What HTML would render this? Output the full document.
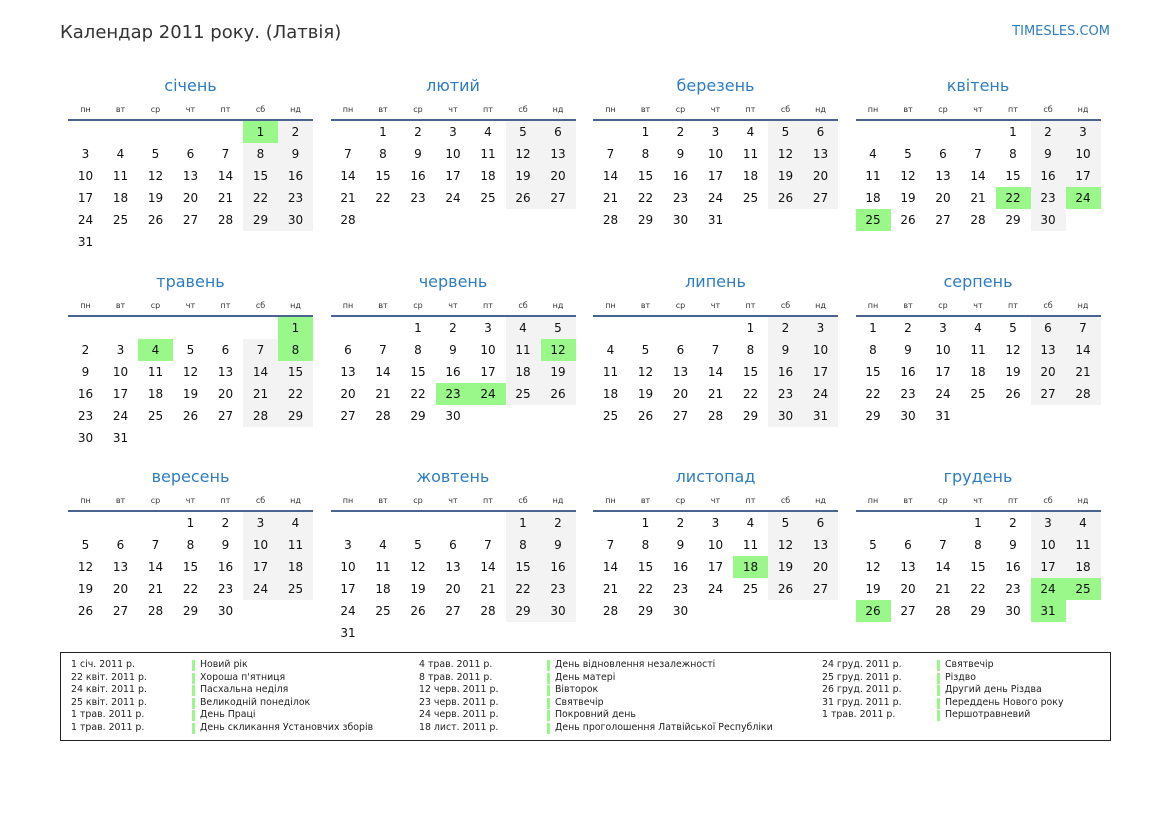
<!DOCTYPE html>
<html><head><meta charset="utf-8"><style>
*{margin:0;padding:0;box-sizing:border-box}
body{width:1169px;height:827px;background:#fff;font-family:"DejaVu Sans","Liberation Sans",sans-serif;color:#111;position:relative;overflow:hidden}
.t{position:absolute;left:60px;top:22px;font-size:18px;color:#333}
.s{position:absolute;right:59px;top:24px;font-size:13px;color:#2f7dc0}
.m{position:absolute;width:245px}
.m h2{height:30px;line-height:31px;text-align:center;font-weight:normal;font-size:16px;color:#2f7dc0}
.wd{position:absolute;top:34px;left:0;width:245px;display:flex;font-size:8px;color:#333;line-height:12px}
.wd span{width:35px;text-align:center}
.ln{position:absolute;top:49px;left:0;width:245px;height:2px;background:#48648f}
table{position:absolute;top:51px;left:0;border-collapse:collapse;table-layout:fixed;width:245px}
td{width:35px;height:22px;text-align:center;font-size:12px;padding:1px 0 0 0;line-height:21px}
td.w{background:#f3f3f3}
td.g{background:#9af78a}
.lg{position:absolute;left:60px;top:652px;width:1051px;height:89px;border:1px solid #222;font-size:9.4px;color:#222}
.c{position:absolute;top:6px;line-height:12.6px;white-space:nowrap}
.n div{padding-left:8px;background:linear-gradient(#9af78a,#9af78a) no-repeat 0 1px/3px 11px}
</style></head><body>
<div class="t">Календар 2011 року. (Латвія)</div>
<div class="s">TIMESLES.COM</div>

<div class="m" style="left:68px;top:70px"><h2>січень</h2><div class="wd"><span>пн</span><span>вт</span><span>ср</span><span>чт</span><span>пт</span><span>сб</span><span>нд</span></div><div class="ln"></div>
<table><tr><td></td><td></td><td></td><td></td><td></td><td class="g">1</td><td class="w">2</td></tr>
<tr><td>3</td><td>4</td><td>5</td><td>6</td><td>7</td><td class="w">8</td><td class="w">9</td></tr>
<tr><td>10</td><td>11</td><td>12</td><td>13</td><td>14</td><td class="w">15</td><td class="w">16</td></tr>
<tr><td>17</td><td>18</td><td>19</td><td>20</td><td>21</td><td class="w">22</td><td class="w">23</td></tr>
<tr><td>24</td><td>25</td><td>26</td><td>27</td><td>28</td><td class="w">29</td><td class="w">30</td></tr>
<tr><td>31</td><td></td><td></td><td></td><td></td><td></td><td></td></tr></table></div>

<div class="m" style="left:330.5px;top:70px"><h2>лютий</h2><div class="wd"><span>пн</span><span>вт</span><span>ср</span><span>чт</span><span>пт</span><span>сб</span><span>нд</span></div><div class="ln"></div>
<table><tr><td></td><td>1</td><td>2</td><td>3</td><td>4</td><td class="w">5</td><td class="w">6</td></tr>
<tr><td>7</td><td>8</td><td>9</td><td>10</td><td>11</td><td class="w">12</td><td class="w">13</td></tr>
<tr><td>14</td><td>15</td><td>16</td><td>17</td><td>18</td><td class="w">19</td><td class="w">20</td></tr>
<tr><td>21</td><td>22</td><td>23</td><td>24</td><td>25</td><td class="w">26</td><td class="w">27</td></tr>
<tr><td>28</td><td></td><td></td><td></td><td></td><td></td><td></td></tr></table></div>

<div class="m" style="left:593px;top:70px"><h2>березень</h2><div class="wd"><span>пн</span><span>вт</span><span>ср</span><span>чт</span><span>пт</span><span>сб</span><span>нд</span></div><div class="ln"></div>
<table><tr><td></td><td>1</td><td>2</td><td>3</td><td>4</td><td class="w">5</td><td class="w">6</td></tr>
<tr><td>7</td><td>8</td><td>9</td><td>10</td><td>11</td><td class="w">12</td><td class="w">13</td></tr>
<tr><td>14</td><td>15</td><td>16</td><td>17</td><td>18</td><td class="w">19</td><td class="w">20</td></tr>
<tr><td>21</td><td>22</td><td>23</td><td>24</td><td>25</td><td class="w">26</td><td class="w">27</td></tr>
<tr><td>28</td><td>29</td><td>30</td><td>31</td><td></td><td></td><td></td></tr></table></div>

<div class="m" style="left:855.5px;top:70px"><h2>квітень</h2><div class="wd"><span>пн</span><span>вт</span><span>ср</span><span>чт</span><span>пт</span><span>сб</span><span>нд</span></div><div class="ln"></div>
<table><tr><td></td><td></td><td></td><td></td><td>1</td><td class="w">2</td><td class="w">3</td></tr>
<tr><td>4</td><td>5</td><td>6</td><td>7</td><td>8</td><td class="w">9</td><td class="w">10</td></tr>
<tr><td>11</td><td>12</td><td>13</td><td>14</td><td>15</td><td class="w">16</td><td class="w">17</td></tr>
<tr><td>18</td><td>19</td><td>20</td><td>21</td><td class="g">22</td><td class="w">23</td><td class="g">24</td></tr>
<tr><td class="g">25</td><td>26</td><td>27</td><td>28</td><td>29</td><td class="w">30</td><td></td></tr></table></div>

<div class="m" style="left:68px;top:265.5px"><h2>травень</h2><div class="wd"><span>пн</span><span>вт</span><span>ср</span><span>чт</span><span>пт</span><span>сб</span><span>нд</span></div><div class="ln"></div>
<table><tr><td></td><td></td><td></td><td></td><td></td><td></td><td class="g">1</td></tr>
<tr><td>2</td><td>3</td><td class="g">4</td><td>5</td><td>6</td><td class="w">7</td><td class="g">8</td></tr>
<tr><td>9</td><td>10</td><td>11</td><td>12</td><td>13</td><td class="w">14</td><td class="w">15</td></tr>
<tr><td>16</td><td>17</td><td>18</td><td>19</td><td>20</td><td class="w">21</td><td class="w">22</td></tr>
<tr><td>23</td><td>24</td><td>25</td><td>26</td><td>27</td><td class="w">28</td><td class="w">29</td></tr>
<tr><td>30</td><td>31</td><td></td><td></td><td></td><td></td><td></td></tr></table></div>

<div class="m" style="left:330.5px;top:265.5px"><h2>червень</h2><div class="wd"><span>пн</span><span>вт</span><span>ср</span><span>чт</span><span>пт</span><span>сб</span><span>нд</span></div><div class="ln"></div>
<table><tr><td></td><td></td><td>1</td><td>2</td><td>3</td><td class="w">4</td><td class="w">5</td></tr>
<tr><td>6</td><td>7</td><td>8</td><td>9</td><td>10</td><td class="w">11</td><td class="g">12</td></tr>
<tr><td>13</td><td>14</td><td>15</td><td>16</td><td>17</td><td class="w">18</td><td class="w">19</td></tr>
<tr><td>20</td><td>21</td><td>22</td><td class="g">23</td><td class="g">24</td><td class="w">25</td><td class="w">26</td></tr>
<tr><td>27</td><td>28</td><td>29</td><td>30</td><td></td><td></td><td></td></tr></table></div>

<div class="m" style="left:593px;top:265.5px"><h2>липень</h2><div class="wd"><span>пн</span><span>вт</span><span>ср</span><span>чт</span><span>пт</span><span>сб</span><span>нд</span></div><div class="ln"></div>
<table><tr><td></td><td></td><td></td><td></td><td>1</td><td class="w">2</td><td class="w">3</td></tr>
<tr><td>4</td><td>5</td><td>6</td><td>7</td><td>8</td><td class="w">9</td><td class="w">10</td></tr>
<tr><td>11</td><td>12</td><td>13</td><td>14</td><td>15</td><td class="w">16</td><td class="w">17</td></tr>
<tr><td>18</td><td>19</td><td>20</td><td>21</td><td>22</td><td class="w">23</td><td class="w">24</td></tr>
<tr><td>25</td><td>26</td><td>27</td><td>28</td><td>29</td><td class="w">30</td><td class="w">31</td></tr></table></div>

<div class="m" style="left:855.5px;top:265.5px"><h2>серпень</h2><div class="wd"><span>пн</span><span>вт</span><span>ср</span><span>чт</span><span>пт</span><span>сб</span><span>нд</span></div><div class="ln"></div>
<table><tr><td>1</td><td>2</td><td>3</td><td>4</td><td>5</td><td class="w">6</td><td class="w">7</td></tr>
<tr><td>8</td><td>9</td><td>10</td><td>11</td><td>12</td><td class="w">13</td><td class="w">14</td></tr>
<tr><td>15</td><td>16</td><td>17</td><td>18</td><td>19</td><td class="w">20</td><td class="w">21</td></tr>
<tr><td>22</td><td>23</td><td>24</td><td>25</td><td>26</td><td class="w">27</td><td class="w">28</td></tr>
<tr><td>29</td><td>30</td><td>31</td><td></td><td></td><td></td><td></td></tr></table></div>

<div class="m" style="left:68px;top:461px"><h2>вересень</h2><div class="wd"><span>пн</span><span>вт</span><span>ср</span><span>чт</span><span>пт</span><span>сб</span><span>нд</span></div><div class="ln"></div>
<table><tr><td></td><td></td><td></td><td>1</td><td>2</td><td class="w">3</td><td class="w">4</td></tr>
<tr><td>5</td><td>6</td><td>7</td><td>8</td><td>9</td><td class="w">10</td><td class="w">11</td></tr>
<tr><td>12</td><td>13</td><td>14</td><td>15</td><td>16</td><td class="w">17</td><td class="w">18</td></tr>
<tr><td>19</td><td>20</td><td>21</td><td>22</td><td>23</td><td class="w">24</td><td class="w">25</td></tr>
<tr><td>26</td><td>27</td><td>28</td><td>29</td><td>30</td><td></td><td></td></tr></table></div>

<div class="m" style="left:330.5px;top:461px"><h2>жовтень</h2><div class="wd"><span>пн</span><span>вт</span><span>ср</span><span>чт</span><span>пт</span><span>сб</span><span>нд</span></div><div class="ln"></div>
<table><tr><td></td><td></td><td></td><td></td><td></td><td class="w">1</td><td class="w">2</td></tr>
<tr><td>3</td><td>4</td><td>5</td><td>6</td><td>7</td><td class="w">8</td><td class="w">9</td></tr>
<tr><td>10</td><td>11</td><td>12</td><td>13</td><td>14</td><td class="w">15</td><td class="w">16</td></tr>
<tr><td>17</td><td>18</td><td>19</td><td>20</td><td>21</td><td class="w">22</td><td class="w">23</td></tr>
<tr><td>24</td><td>25</td><td>26</td><td>27</td><td>28</td><td class="w">29</td><td class="w">30</td></tr>
<tr><td>31</td><td></td><td></td><td></td><td></td><td></td><td></td></tr></table></div>

<div class="m" style="left:593px;top:461px"><h2>листопад</h2><div class="wd"><span>пн</span><span>вт</span><span>ср</span><span>чт</span><span>пт</span><span>сб</span><span>нд</span></div><div class="ln"></div>
<table><tr><td></td><td>1</td><td>2</td><td>3</td><td>4</td><td class="w">5</td><td class="w">6</td></tr>
<tr><td>7</td><td>8</td><td>9</td><td>10</td><td>11</td><td class="w">12</td><td class="w">13</td></tr>
<tr><td>14</td><td>15</td><td>16</td><td>17</td><td class="g">18</td><td class="w">19</td><td class="w">20</td></tr>
<tr><td>21</td><td>22</td><td>23</td><td>24</td><td>25</td><td class="w">26</td><td class="w">27</td></tr>
<tr><td>28</td><td>29</td><td>30</td><td></td><td></td><td></td><td></td></tr></table></div>

<div class="m" style="left:855.5px;top:461px"><h2>грудень</h2><div class="wd"><span>пн</span><span>вт</span><span>ср</span><span>чт</span><span>пт</span><span>сб</span><span>нд</span></div><div class="ln"></div>
<table><tr><td></td><td></td><td></td><td>1</td><td>2</td><td class="w">3</td><td class="w">4</td></tr>
<tr><td>5</td><td>6</td><td>7</td><td>8</td><td>9</td><td class="w">10</td><td class="w">11</td></tr>
<tr><td>12</td><td>13</td><td>14</td><td>15</td><td>16</td><td class="w">17</td><td class="w">18</td></tr>
<tr><td>19</td><td>20</td><td>21</td><td>22</td><td>23</td><td class="g">24</td><td class="g">25</td></tr>
<tr><td class="g">26</td><td>27</td><td>28</td><td>29</td><td>30</td><td class="g">31</td><td></td></tr></table></div>

<div class="lg">
<div class="c" style="left:10px"><div>1 січ. 2011 р.</div><div>22 квіт. 2011 р.</div><div>24 квіт. 2011 р.</div><div>25 квіт. 2011 р.</div><div>1 трав. 2011 р.</div><div>1 трав. 2011 р.</div></div>
<div class="c n" style="left:131px"><div>Новий рік</div><div>Хороша п'ятниця</div><div>Пасхальна неділя</div><div>Великодній понеділок</div><div>День Праці</div><div>День скликання Установчих зборів</div></div>
<div class="c" style="left:358px"><div>4 трав. 2011 р.</div><div>8 трав. 2011 р.</div><div>12 черв. 2011 р.</div><div>23 черв. 2011 р.</div><div>24 черв. 2011 р.</div><div>18 лист. 2011 р.</div></div>
<div class="c n" style="left:486px"><div>День відновлення незалежності</div><div>День матері</div><div>Вівторок</div><div>Святвечір</div><div>Покровний день</div><div>День проголошення Латвійської Республіки</div></div>
<div class="c" style="left:761px"><div>24 груд. 2011 р.</div><div>25 груд. 2011 р.</div><div>26 груд. 2011 р.</div><div>31 груд. 2011 р.</div><div>1 трав. 2011 р.</div></div>
<div class="c n" style="left:876px"><div>Святвечір</div><div>Різдво</div><div>Другий день Різдва</div><div>Переддень Нового року</div><div>Першотравневий</div></div>
</div>
</body></html>
